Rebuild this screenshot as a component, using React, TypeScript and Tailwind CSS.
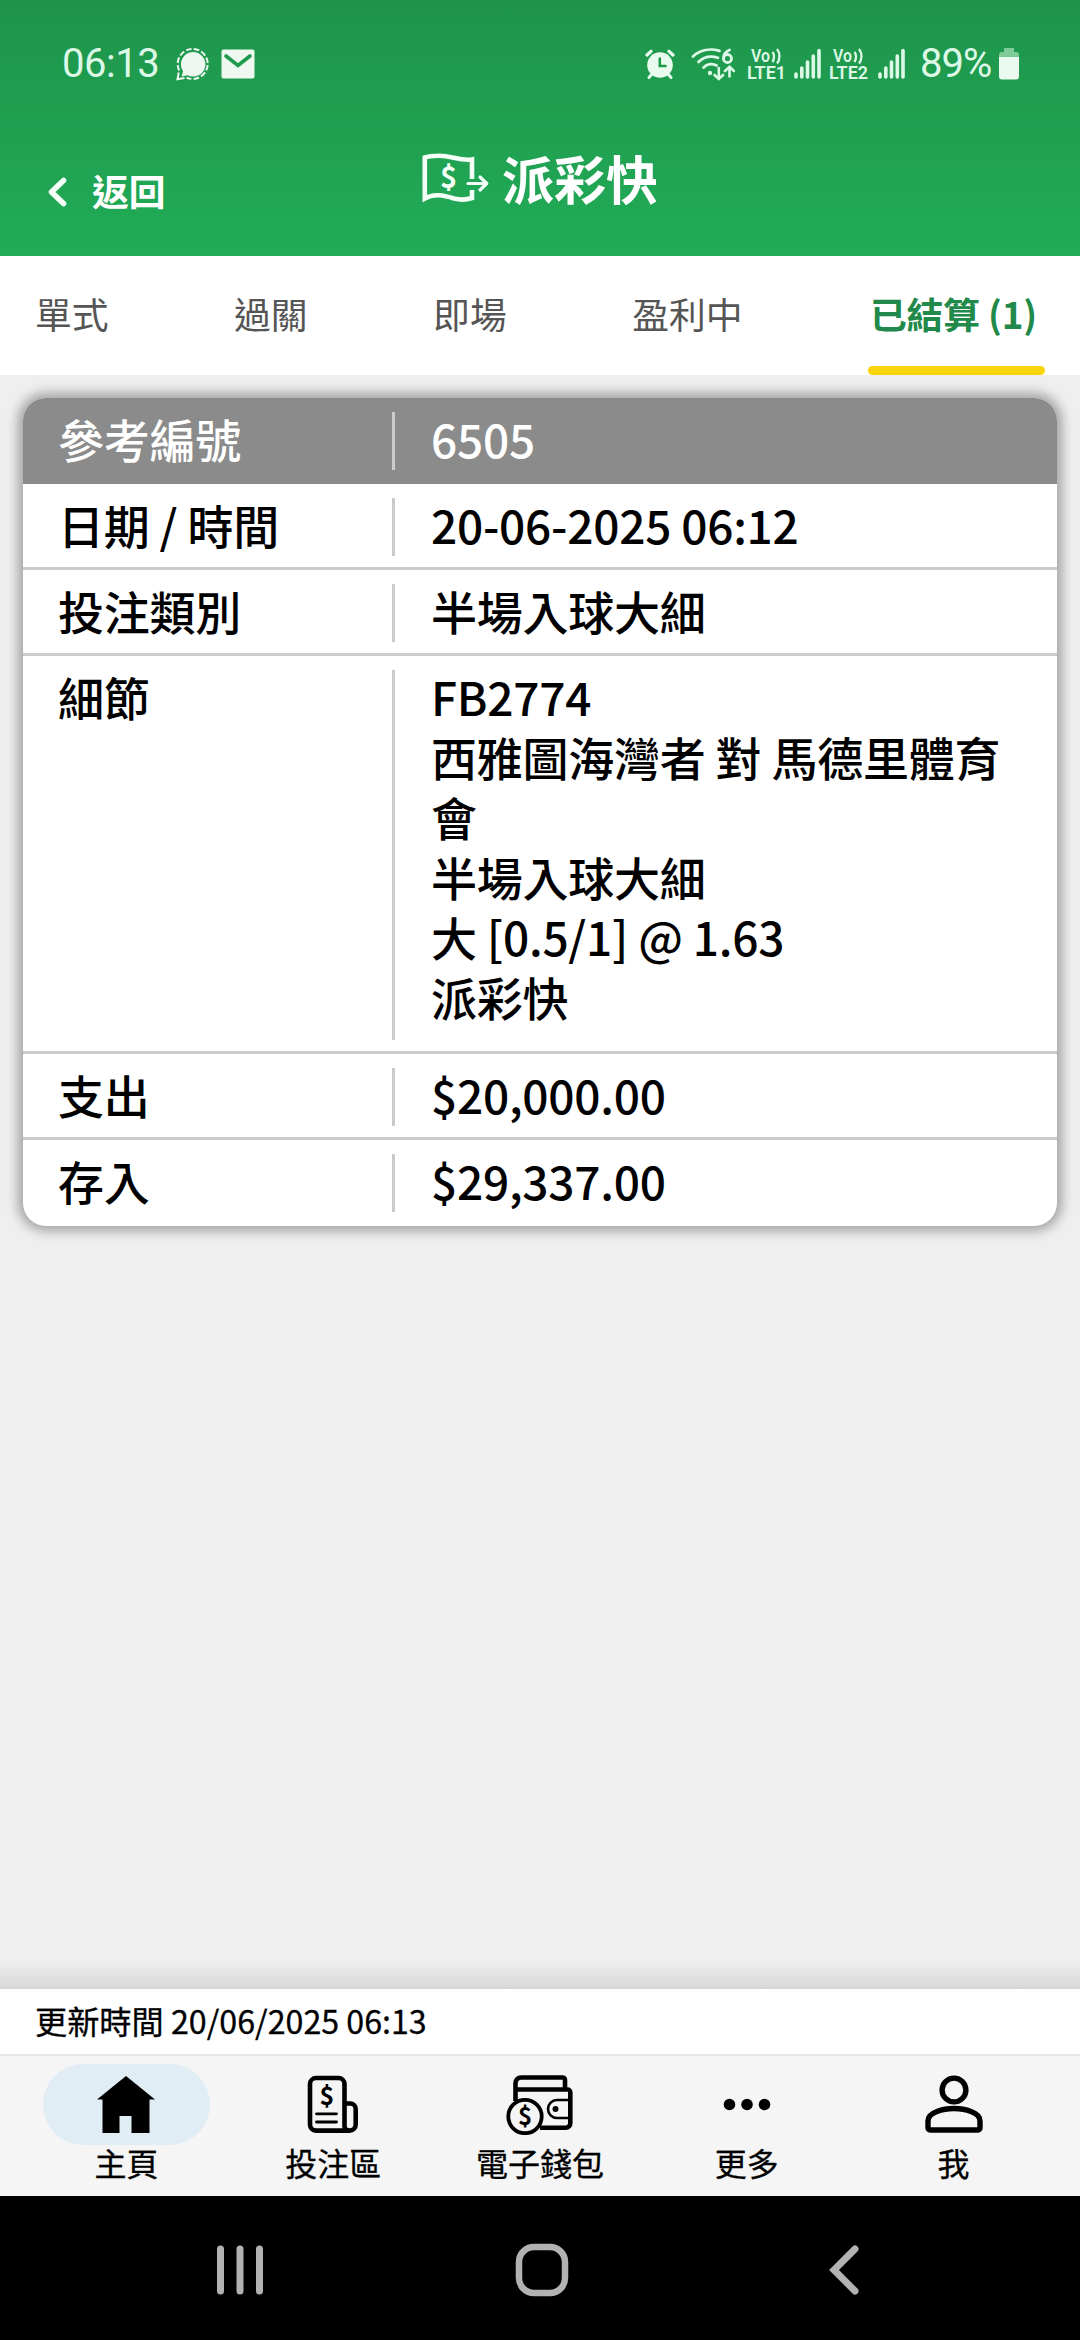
import type { ReactNode } from "react"

const tabs = ["單式", "過關", "即場", "盈利中", "已結算 (1)"]

const rows = [
    { label: "參考編號", value: ["6505"], head: true },
    { label: "日期 / 時間", value: ["20-06-2025 06:12"] },
    { label: "投注類別", value: ["半場入球大細"] },
    { label: "細節", value: ["FB2774", "西雅圖海灣者 對 馬德里體育會", "半場入球大細", "大 [0.5/1] @ 1.63", "派彩快"], tall: true },
    { label: "支出", value: ["$20,000.00"] },
    { label: "存入", value: ["$29,337.00"] },
]

function ChatIcon() {
    return (
        <svg width="34" height="34" viewBox="0 0 34 34" fill="none">
            <path d="M17 5a12.300 12.300 0 1 1-5.600 23.200L5.600 29.600l1.500-5.400A12.300 12.300 0 0 1 17 5z" fill="#eef8f1" />
            <path d="M3.200 23.500A15 15 0 1 1 10.500 30.600" stroke="#eef8f1" strokeWidth="2" strokeDasharray="5.600 2.200" />
            <path d="M2.700 25.500L1.500 32.300l7-1.200" stroke="#eef8f1" strokeWidth="2" />
        </svg>
    )
}

function MailIcon() {
    return (
        <svg width="34" height="30" viewBox="0 0 34 30" fill="none">
            <rect x="0.500" y="0.500" width="33" height="29" rx="2" fill="#eef8f1" />
            <path d="M5 7l12 9.500L29 7" stroke="#1e9a4d" strokeWidth="3.600" strokeLinecap="round" />
        </svg>
    )
}

function AlarmIcon() {
    return (
        <svg width="30" height="30" viewBox="0 0 30 30" fill="none" stroke="#e8fbee" strokeLinecap="round">
            <circle cx="15" cy="16" r="12.800" fill="#e8fbee" stroke="none" />
            <path d="M2 6L6 2.300M28 6L24 2.300" strokeWidth="3.200" />
            <path d="M7 25l-3 3.500M23 25l3 3.500" strokeWidth="3" />
            <path d="M14.800 9.500v7.500h5.700" stroke="#1e9a4d" strokeWidth="2.600" />
        </svg>
    )
}

function WifiIcon() {
    return (
        <svg width="44" height="34" viewBox="0 0 44 34" fill="none" stroke="#dcf8e6" strokeWidth="2.800" strokeLinecap="round">
            <path d="M2 9.500C9 3 19 1 28.500 3.800" />
            <path d="M7.500 15C12.500 10 20 8.600 27 10.800" />
            <path d="M12.500 20.500c3.500-3.700 9-4.500 13-2" />
            <circle cx="19" cy="26" r="2.200" fill="#dcf8e6" stroke="none" />
            <path d="M38.500 3c-3.500 1.500-6 5-6 8.500" />
            <circle cx="36.500" cy="11.500" r="4" />
            <path d="M27.800 21v10.500M23.500 28l4.300 4 4.300-4" strokeWidth="2.600" />
            <path d="M38.500 29.500V20M34 24l4.500-4.300L43 24" strokeWidth="2.600" />
        </svg>
    )
}

function LteIcon({ n }: { n: number }) {
    return (
        <svg className="overflow-visible" width="40" height="34" viewBox="0 0 40 34" fill="#dcf8e6" fontFamily="Roboto, sans-serif" fontWeight="600">
            <text x="4" y="14.500" fontSize="17.500" textLength="19" lengthAdjust="spacingAndGlyphs">Vo</text>
            <path d="M25.500 5c2 2.500 2 7 0 10M30 2c3.300 4 3.300 10.500 0 14.500" fill="none" stroke="#dcf8e6" strokeWidth="2.300" />
            <text x="0" y="32" fontSize="19" textLength="39" lengthAdjust="spacingAndGlyphs">{"LTE" + n}</text>
        </svg>
    )
}

function BarsIcon() {
    return (
        <svg width="28" height="32" viewBox="0 0 28 32" stroke="#dcf8e6" strokeWidth="3.600" strokeLinecap="round">
            <path d="M2 26v3M7.800 20v9M13.500 14v15M19.300 8v21M25 2.500V29" />
        </svg>
    )
}

function BatteryIcon() {
    return (
        <svg width="20" height="32" viewBox="0 0 20 32">
            <path d="M5 0h10v4h2a3 3 0 0 1 3 3v3H0V7a3 3 0 0 1 3-3h2z" fill="#7fcb98" />
            <path d="M0 9h20v19.500a3 3 0 0 1-3 3H3a3 3 0 0 1-3-3z" fill="#eafaf0" />
        </svg>
    )
}

function PayoutIcon() {
    return (
        <svg width="68" height="50" viewBox="0 0 68 50" fill="none" stroke="#f4fff8" strokeWidth="4.600">
            <path d="M50 26V6.500C38 8.500 28 2 16 2.800 10 3 6 3.500 2.800 4.500v41C12 40 22 42.500 32 45.500c7 1.800 12 1.500 18-.500V37" />
            <path d="M46 30.500h18M58 24l6.800 6.500L58 37" strokeWidth="3.200" strokeLinecap="round" strokeLinejoin="round" />
            <text x="26.500" y="35" fontSize="29" fontWeight="700" fill="#f4fff8" stroke="none" textAnchor="middle" fontFamily="'Noto Sans CJK TC', sans-serif">$</text>
        </svg>
    )
}

function HomeIcon() {
    return (
        <svg width="60" height="60" viewBox="0 0 60 60">
            <path d="M30 1L1 24.500h5.500V58h17V41h12v17h18V24.500H59z" />
        </svg>
    )
}

function SlipIcon() {
    return (
        <svg width="52" height="60" viewBox="0 0 52 60" fill="none" stroke="black" strokeWidth="4.600">
            <path d="M43 55.600H9a6 6 0 0 1-6-6V9a6 6 0 0 1 6-6h22.500a6 6 0 0 1 6 6v42.500c0 2.500 2 4.100 5 4.100 3.500 0 6.200-2.600 6.200-6V34a5.500 5.500 0 0 0-5.500-5.500h-4.700" />
            <path d="M9.500 38.800h20M9.500 47h20" strokeWidth="2.800" strokeLinecap="round" />
            <text x="20" y="29.500" fontSize="25" fontWeight="700" fill="black" stroke="none" textAnchor="middle" fontFamily="'Noto Sans CJK TC', sans-serif">$</text>
        </svg>
    )
}

function WalletIcon() {
    return (
        <svg width="68" height="60" viewBox="0 0 68 60" fill="none" stroke="black" strokeWidth="4.600">
            <path d="M9.500 26V8a5.500 5.500 0 0 1 5.500-5.500h41.500a2.500 2.500 0 0 1 2.500 2.500v9" />
            <path d="M10 14.500h51.500a2.800 2.800 0 0 1 2.800 2.800v31a4.500 4.500 0 0 1-4.500 4.500H34" />
            <path d="M64 25H51a9 9 0 0 0 0 18h13" strokeWidth="2.600" />
            <circle cx="49.500" cy="34" r="3" fill="black" stroke="none" />
            <circle cx="19" cy="41.500" r="16.700" fill="#f5f5f5" strokeWidth="3.800" />
            <text x="19" y="50" fontSize="24" fontWeight="700" fill="black" stroke="none" textAnchor="middle" fontFamily="'Noto Sans CJK TC', sans-serif">$</text>
        </svg>
    )
}

function MoreIcon() {
    return (
        <svg width="48" height="60" viewBox="0 0 48 60">
            <circle cx="6.500" cy="29.500" r="5.800" />
            <circle cx="24" cy="29.500" r="5.800" />
            <circle cx="41.500" cy="29.500" r="5.800" />
        </svg>
    )
}

function PersonIcon() {
    return (
        <svg width="58" height="60" viewBox="0 0 58 60" fill="none" stroke="black" strokeWidth="5.400">
            <circle cx="29" cy="15" r="11.900" />
            <path d="M3 46c0-5 3.500-7.500 9-9.500 10-4 24-4 34 0 5.500 2 9 4.500 9 9.500v7a2 2 0 0 1-2 2H5a2 2 0 0 1-2-2z" />
        </svg>
    )
}

const nav: { label: string; icon: ReactNode; active?: boolean }[] = [
    { label: "主頁", icon: <HomeIcon />, active: true },
    { label: "投注區", icon: <SlipIcon /> },
    { label: "電子錢包", icon: <WalletIcon /> },
    { label: "更多", icon: <MoreIcon /> },
    { label: "我", icon: <PersonIcon /> },
]

function StatusBar() {
    return (
        <div className="flex h-[127px] items-center justify-between pr-[61px] pl-[62px] font-[Roboto,sans-serif] text-[40px] leading-none text-[#dcf8e6]">
            <div className="flex items-center">
                <span className="w-[114px] tracking-[-0.5px]">06:13</span>
                <ChatIcon />
                <span className="ml-[11px]">
                    <MailIcon />
                </span>
            </div>
            <div className="flex items-center">
                <AlarmIcon />
                <span className="ml-[16px]">
                    <WifiIcon />
                </span>
                <span className="ml-[12px]">
                    <LteIcon n={1} />
                </span>
                <span className="ml-[7px]">
                    <BarsIcon />
                </span>
                <span className="ml-[7px]">
                    <LteIcon n={2} />
                </span>
                <span className="ml-[9px]">
                    <BarsIcon />
                </span>
                <span className="ml-[14px] w-[79px] tracking-[-1px]">89%</span>
                <BatteryIcon />
            </div>
        </div>
    )
}

function Header() {
    return (
        <header className="h-[256px] bg-linear-to-b from-[#1e944b] to-[#21ac57] text-white">
            <StatusBar />
            <div className="grid h-[101px] grid-cols-[1fr_auto_1fr] items-center px-[47px]">
                <div className="flex items-center gap-[25px] pt-[28px]">
                    <svg className="mt-[2px]" width="20" height="30" viewBox="0 0 20 30" fill="none" stroke="#f4fff8" strokeWidth="5.600" strokeLinecap="round" strokeLinejoin="round">
                        <path d="M16.500 3.500L4.500 15l12 11.500" />
                    </svg>
                    <span className="-mt-[2px] text-[36.800px] leading-none font-bold">返回</span>
                </div>
                <h1 className="flex items-center gap-[12px] text-[52px] leading-none font-bold">
                    <PayoutIcon />
                    派彩快
                </h1>
            </div>
        </header>
    )
}

export default function App() {
    return (
        <div className="flex h-[2340px] w-[1080px] flex-col overflow-hidden bg-[#efefef] font-['Noto_Sans_CJK_TC',sans-serif] text-black">
            <Header />

            <div className="flex h-[119px] shrink-0 justify-between bg-white pr-[35px] pl-[35px] text-[36.800px] leading-[115px] text-[#555]">
                {tabs.map((tab, i) =>
                    i === 4 ? (
                        <div key={tab} className="flex w-[177px] flex-col justify-between font-bold text-[#21894a]">
                            <span className="h-[110px] pl-[2px] tracking-[-0.2px] whitespace-nowrap">{tab}</span>
                            <span className="h-[9px] rounded-full bg-[#fbd50b]" />
                        </div>
                    ) : (
                        <span key={tab}>{tab}</span>
                    )
                )}
            </div>

            <main className="flex-1 px-[23px] pt-[23px]">
                <div className="overflow-hidden rounded-[23px] bg-white shadow-[0_0_12px_5px_rgba(0,0,0,0.32)]">
                    {rows.map((row, i) => (
                        <div
                            key={row.label}
                            className={`flex pt-[14px] text-[46px] leading-[60px] font-medium tracking-[-0.25px] ${row.head ? "bg-[#8b8b8b] text-white" : ""} ${row.head || i === rows.length - 1 ? "pb-[14px]" : "border-b-3 border-[#cbcbcb] pb-[11px]"}`}
                        >
                            <div className={`flex w-[372px] border-r-3 border-[#cbcbcb] pl-[35px] ${row.tall ? "h-[370px]" : "h-[58px]"}`}>
                                <span className="-mt-1">{row.label}</span>
                            </div>
                            <div className="-mt-1 flex-1 pr-[50px] pl-[36px]">
                                {row.value.map((line) => (
                                    <p key={line}>{line}</p>
                                ))}
                            </div>
                        </div>
                    ))}
                </div>
            </main>

            <div className="h-[29px] bg-linear-to-b from-[#efefef] to-[#d8d8d8]" />
            <div className="h-[67px] shrink-0 border-b-2 border-[#e6e6e6] bg-white pl-[35px] text-[32.200px] leading-[63px] [-webkit-text-stroke:0.3px_black]">更新時間 20/06/2025 06:13</div>

            <nav className="grid h-[140px] shrink-0 grid-cols-5 bg-[#f5f5f5] px-[23px] pt-[8px]">
                {nav.map((item) => (
                    <div key={item.label} className="flex flex-col items-center">
                        <div className={`flex h-[81px] w-[167px] items-center justify-center rounded-full ${item.active ? "bg-[#e1edf5]" : ""}`}>{item.icon}</div>
                        <span className="text-[32px] leading-[35px] [-webkit-text-stroke:0.3px_black]">{item.label}</span>
                    </div>
                ))}
            </nav>

            <div className="flex h-[144px] shrink-0 items-center bg-black pt-[3px] pl-[217px]">
                <svg width="47" height="52" viewBox="0 0 47 52" stroke="#b2b2b2" strokeWidth="7" strokeLinecap="round">
                    <path d="M3.500 5v42M23 5v42M42.500 5v42" />
                </svg>
                <svg className="ml-[251px]" width="54" height="54" viewBox="0 0 54 54" fill="none" stroke="#b2b2b2" strokeWidth="6.500">
                    <rect x="4" y="4" width="46" height="46" rx="15" />
                </svg>
                <svg className="ml-[257px]" width="34" height="52" viewBox="0 0 34 52" fill="none" stroke="#b2b2b2" strokeWidth="7" strokeLinecap="round">
                    <path d="M29 5L8 26 29 47" />
                </svg>
            </div>
        </div>
    )
}
